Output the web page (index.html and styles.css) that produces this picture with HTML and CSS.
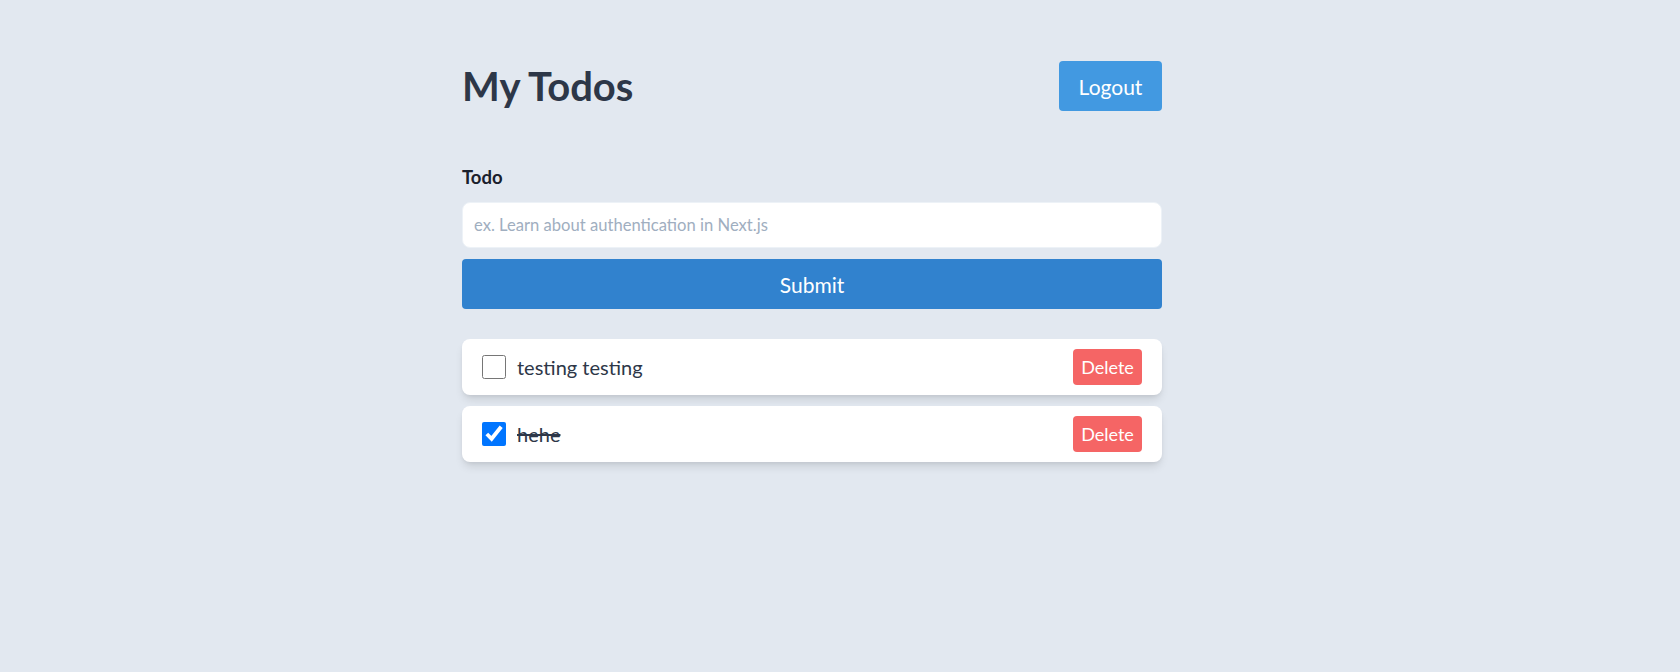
FILE: index.html
```html
<!DOCTYPE html>
<html lang="en">
<head>
<meta charset="utf-8">
<title>My Todos</title>
<link rel="stylesheet" href="styles.css">
</head>
<body>
<main class="page">
  <div class="container">
    <header class="header">
      <h1 class="title">My Todos</h1>
      <button class="btn-logout" type="button">Logout</button>
    </header>
    <form class="todo-form">
      <label class="label" for="todo">Todo</label>
      <input class="input" id="todo" type="text" placeholder="ex. Learn about authentication in Next.js">
      <button class="btn-submit" type="button">Submit</button>
    </form>
    <ul class="todo-list">
      <li class="todo-item">
        <div class="todo-left">
          <input class="check" type="checkbox">
          <span class="todo-text">testing testing</span>
        </div>
        <button class="btn-delete" type="button">Delete</button>
      </li>
      <li class="todo-item">
        <div class="todo-left">
          <input class="check" type="checkbox" checked>
          <span class="todo-text done">hehe</span>
        </div>
        <button class="btn-delete" type="button">Delete</button>
      </li>
    </ul>
  </div>
</main>
</body>
</html>
```

FILE: styles.css
```css
* { box-sizing: border-box; }
html, body {
  margin: 0;
  padding: 0;
  background: #e2e8f0;
  font-family: Lato, "Noto Sans", sans-serif;
  color: #2d3748;
}
.page {
  min-height: 672px;
  padding-top: 61px;
  padding-left: 462px;
}
.container {
  width: 700px;
}
.header {
  display: flex;
  align-items: center;
  justify-content: space-between;
  height: 50px;
}
.title {
  margin: 0;
  font-size: 40px;
  font-weight: 700;
  line-height: 44px;
  color: #2d3748;
}
.btn-logout {
  width: 103px;
  height: 50px;
  border: 0;
  border-radius: 4px;
  background: #4299e1;
  color: #fff;
  font-family: inherit;
  font-size: 21px;
  padding: 0;
}
.todo-form {
  display: flex;
  flex-direction: column;
  margin-top: 52px;
}
.label {
  font-size: 18.5px;
  font-weight: 700;
  line-height: 28px;
  color: #1a202c;
  margin-bottom: 11px;
}
.input {
  height: 46px;
  border: 1px solid #edf2f7;
  border-radius: 8px;
  background: #fff;
  padding: 0 11px;
  font-family: inherit;
  font-size: 16.6px;
  color: #2d3748;
  outline: none;
}
.input::placeholder { color: #a0aec0; }
.btn-submit {
  margin-top: 11px;
  height: 50px;
  border: 0;
  border-radius: 4px;
  background: #3182ce;
  color: #fff;
  font-family: inherit;
  font-size: 21px;
}
.todo-list {
  list-style: none;
  margin: 30px 0 0;
  padding: 0;
  display: flex;
  flex-direction: column;
  gap: 11px;
}
.todo-item {
  display: flex;
  align-items: center;
  justify-content: space-between;
  height: 56px;
  padding: 0 20px;
  background: #fff;
  border-radius: 8px;
  box-shadow: 0 6px 10px -2px rgba(0,0,0,0.12), 0 2px 4px -1px rgba(0,0,0,0.06);
}
.todo-left {
  display: flex;
  align-items: center;
  gap: 11px;
}
.check {
  width: 24px;
  height: 24px;
  margin: 0;
}
.todo-text {
  font-size: 20px;
  color: #2d3748;
}
.todo-text.done { text-decoration: line-through; }
.btn-delete {
  width: 69px;
  height: 36px;
  border: 0;
  border-radius: 4px;
  background: #f56565;
  color: #fff;
  font-family: inherit;
  font-size: 18px;
  padding: 0;
}
```
